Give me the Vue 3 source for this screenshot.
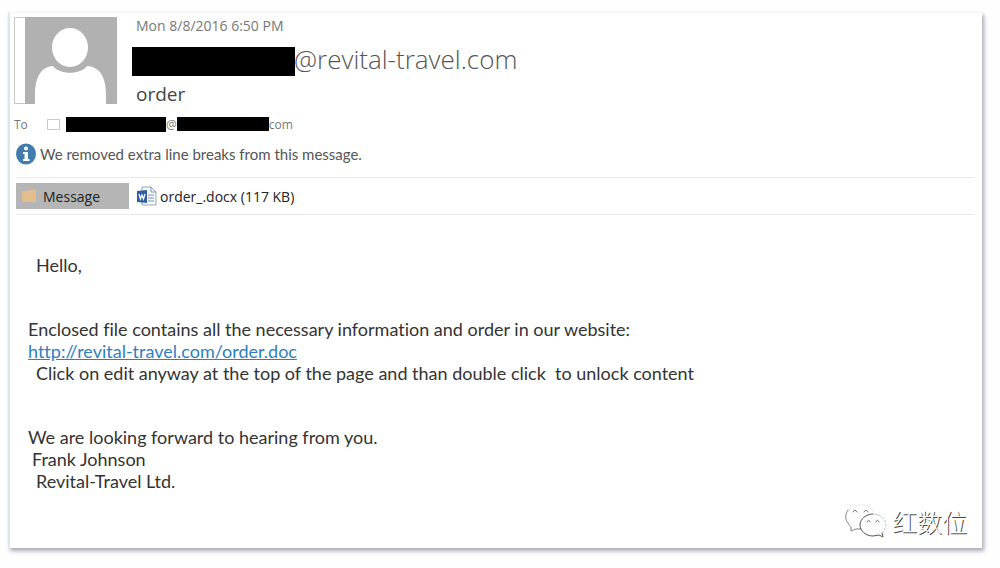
<script setup>
const opening = 'Enclosed file contains all the necessary information and order in our website:'
const link = 'http://revital-travel.com/order.doc'
</script>

<template>
  <div class="page">
    <article class="mail">
      <header class="head">
        <svg class="avatar" viewBox="0 0 103 88" aria-hidden="true">
          <rect x="0.5" y="0.5" width="102" height="86" fill="#fff" stroke="#c9c9c9" />
          <rect x="11" y="0" width="92" height="87" fill="#b1b1b1" />
          <path d="M21 88 V78 C21 60 27 50 39 49 C45 58 67 58 73 49 C86 50 92 60 92 78 V88 Z" fill="#fff" />
          <ellipse cx="56" cy="30.500" rx="18" ry="19.500" fill="#fff" />
        </svg>
        <div class="meta">
          <time class="date">Mon 8/8/2016 6:50 PM</time>
          <div class="from"><span class="bar sender"></span><span class="domain">@revital-travel.com</span></div>
          <h1 class="subject">order</h1>
        </div>
      </header>

      <div class="to">
        <span class="to-label">To</span>
        <span class="presence"></span>
        <span class="bar name"></span>
        <span>@</span>
        <span class="bar host"></span>
        <span>com</span>
      </div>

      <div class="notice">
        <svg class="info" viewBox="0 0 20 22" aria-hidden="true">
          <ellipse cx="10" cy="11" rx="10" ry="10.500" fill="#427caf" />
          <ellipse cx="10" cy="5.500" rx="2" ry="2" fill="#fff" />
          <path d="M7 9 H12 V16 H13.500 V18 H7 V16 H8.500 V11 H7 Z" fill="#fff" />
        </svg>
        <span>We removed extra line breaks from this message.</span>
      </div>

      <nav class="tabs">
        <button class="tab" type="button">
          <svg class="folder" viewBox="0 0 17 14" aria-hidden="true">
            <path d="M1 2 H7 L8 1 H15 V13 H1 Z" fill="#e3bd8c" />
          </svg>
          <span>Message</span>
        </button>
        <button class="file" type="button">
          <svg class="word" viewBox="0 0 20 20" aria-hidden="true">
            <path d="M5 1 H14 L19 6 V19 H5 Z" fill="#f7f9fb" stroke="#9aa6b5" />
            <path d="M14 1 V6 H19" fill="none" stroke="#8796aa" />
            <path d="M11 9 H17 M11 12 H17 M11 15 H17" stroke="#a5b5ca" stroke-width="1.500" />
            <path d="M0 5 L10 4 V17 L0 16 Z" fill="#2e5fa6" />
            <path d="M2 8 L3.500 13 L5 9 L6.500 13 L8 8" fill="none" stroke="#fff" stroke-width="1.300" />
          </svg>
          <span>order_.docx (117 KB)</span>
        </button>
      </nav>

      <section class="body">
        <p class="inset">Hello,</p>
        <div class="block">
          <p>{{ opening }}</p>
          <p><a href="#">{{ link }}</a></p>
          <p class="inset">Click on edit anyway at the top of the page and than double click&nbsp; to unlock content</p>
        </div>
        <div class="block">
          <p>We are looking forward to hearing from you.</p>
          <p class="half">Frank Johnson</p>
          <p class="inset">Revital-Travel Ltd.</p>
        </div>
      </section>

      <footer class="brand">
        <svg class="wechat" viewBox="0 0 42 36" aria-hidden="true">
          <g fill="none" stroke-linejoin="round" stroke-linecap="round">
            <path d="M28 8 C25 4 21 2 16 2 C11 2 6 4 3 8" stroke="#ddd" stroke-dasharray="1 2" />
            <path d="M3 7 C0 11 0 17 3 20 C4 22 5 23 6 24 L6 28 L11 26 L16 26" stroke="#777" stroke-width="0.900" />
            <path d="M28 11 C21 11 15 16 15 22 C15 28 21 33 28 33 C30 33 32 32 34 32 L38 34 L37 30" stroke="#555" />
            <path d="M37 30 C39 27 41 25 41 22 C41 16 35 11 28 11" stroke="#bbb" stroke-dasharray="2 2" />
            <path d="M8 9 Q10 5 12 9 M19 9 Q21 5 23 9 M22 19 Q24 15 25 19 M31 19 Q32 15 34 19" stroke="#777" />
          </g>
        </svg>
        <span>红数位</span>
      </footer>
    </article>
  </div>
</template>

<style>
body {
  margin: 0;
  background: #fefefe;
}
</style>

<style scoped>
.page {
  box-sizing: border-box;
  min-height: 100vh;
  padding: 12px 18px 20px 8px;
  display: flex;
  font-family: "Open Sans", "Noto Sans", sans-serif;
  color: #444;
}
.mail {
  flex: 1;
  min-width: 0;
  box-sizing: border-box;
  display: flex;
  flex-direction: column;
  padding: 4px 8px 9px 4px;
  background: #fff;
  border-top: 1px solid #f6f6f6;
  border-left: 2px solid #dce6f2;
  box-shadow: 2px 3px 4px #a9a9b3;
}
.head {
  display: flex;
  gap: 15px;
}
.avatar {
  width: 103px;
  height: 88px;
  flex: none;
}
.meta {
  padding-left: 4px;
}
.date {
  display: block;
  font-size: 14px;
  line-height: 18px;
  color: #777;
}
.from {
  display: flex;
  align-items: center;
  height: 30px;
  margin: 11px 0 7px -4px;
}
.bar {
  background: #000;
  flex: none;
}
.sender {
  width: 163px;
  height: 29px;
}
.domain {
  margin-left: -1px;
  font-size: 26px;
  font-weight: 300;
  line-height: 28px;
  padding-bottom: 4px;
  color: #555;
}
.subject {
  margin: 0;
  font-size: 19px;
  font-weight: 400;
  line-height: 22px;
  color: #444;
}
.to {
  display: flex;
  align-items: center;
  height: 20px;
  margin-top: 9px;
  font-size: 12px;
  color: #777;
}
.to-label {
  width: 33px;
}
.presence {
  box-sizing: border-box;
  width: 13px;
  height: 11px;
  margin-right: 6px;
  border: 1px solid #ccc;
}
.name {
  width: 100px;
  height: 15px;
}
.host {
  width: 92px;
  height: 14px;
}
.notice {
  display: flex;
  align-items: center;
  gap: 4px;
  height: 22px;
  margin: 9px 0 12px 2px;
  font-family: Lato, sans-serif;
  font-size: 15px;
  color: #555;
}
.info {
  width: 20px;
  height: 22px;
}
.tabs {
  display: flex;
  align-items: center;
  gap: 8px;
  margin-left: 2px;
  padding: 5px 0;
  border-top: 1px solid #e8e8ea;
  border-bottom: 1px solid #e8e8ea;
}
.tab,
.file {
  display: flex;
  align-items: center;
  height: 26px;
  padding: 0;
  border: 0;
  background: none;
  font-family: "Open Sans", sans-serif;
  font-size: 14px;
  color: #222;
}
.tab {
  width: 113px;
  gap: 5px;
  padding-left: 5px;
  background: #b5b5b5;
}
.file {
  gap: 3px;
}
.folder {
  width: 17px;
  height: 14px;
}
.word {
  width: 20px;
  height: 20px;
}
.body {
  padding: 39px 12px 0 14px;
  font-family: Lato, Carlito, sans-serif;
  font-size: 18px;
  line-height: 22px;
  font-variant-ligatures: none;
  color: #333;
}
.body p {
  margin: 0;
}
.body .inset {
  padding-left: 8px;
}
.body .half {
  padding-left: 4px;
}
.block {
  margin-top: 42px;
}
.body a {
  color: #2e7fc0;
  text-decoration: underline;
}
.brand {
  display: flex;
  align-items: center;
  justify-content: flex-end;
  gap: 5px;
  margin-top: auto;
  padding: 0 7px 0 0;
  font-family: "Noto Sans CJK SC", sans-serif;
  font-size: 25px;
  font-weight: 300;
  line-height: 32px;
  color: #fff;
  text-shadow: 1px 1px 0 #444;
}
.wechat {
  width: 42px;
  height: 36px;
}
</style>
